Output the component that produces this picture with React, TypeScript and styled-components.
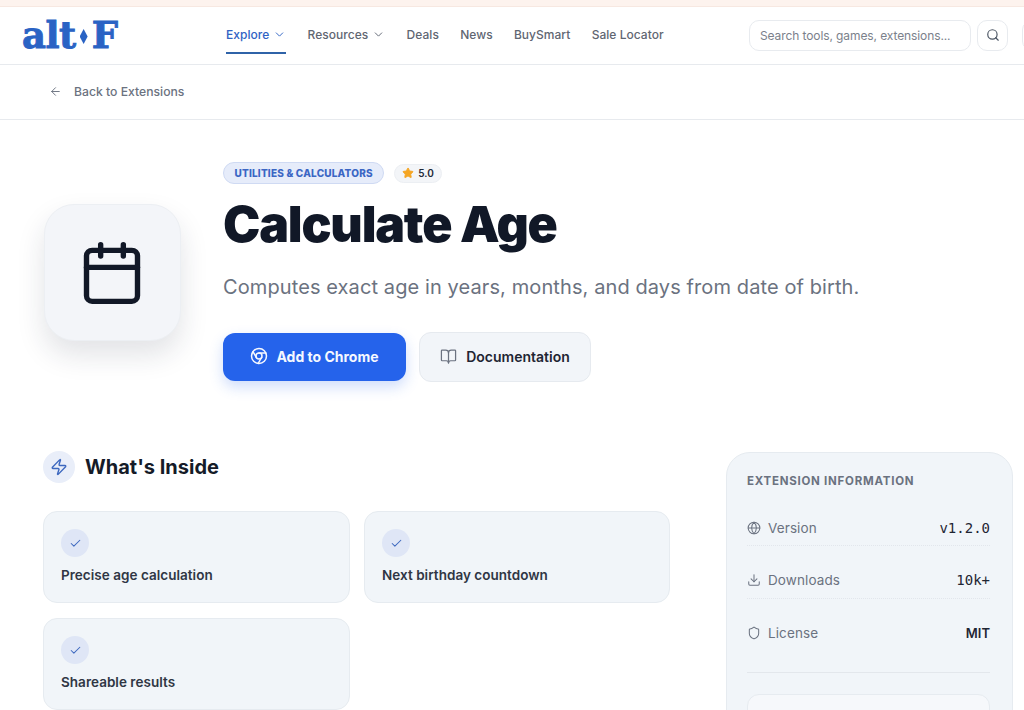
import React from "react";
import styled, { createGlobalStyle } from "styled-components";
import { ArrowLeft, BookOpen, Calendar, Check, ChevronDown, Chrome, Download, Globe, Search, Shield, Star, Zap } from "lucide-react";

const GlobalStyle = createGlobalStyle`
  html, body {
    margin: 0;
    height: 710px;
    overflow: hidden;
    background: #fff;
    font-family: Inter, "Liberation Sans", sans-serif;
    color: #111827;
  }
  * { box-sizing: border-box; }
`;

const TopStrip = styled.div`
  height: 7px;
  background: #fdf3ee;
  border-bottom: 1px solid #f7e8e1;
`;

const Header = styled.header`
  height: 58px;
  width: 1060px;
  display: flex;
  align-items: center;
  padding-left: 23px;
  border-bottom: 1px solid #e7eaee;
  white-space: nowrap;
`;

const Logo = styled.div`
  flex: none;
  width: 204px;
  height: 40px;
  margin-left: -1px;
  padding-bottom: 1px;
  display: flex;
  align-items: center;
  font-family: "DejaVu Serif", serif;
  font-weight: 700;
  font-size: 37px;
  line-height: 40px;
  letter-spacing: -0.5px;
  color: #2a63c4;
  -webkit-text-stroke: 0.9px #2a63c4;
`;

const LogoDiamond = styled.span`
  width: 8px;
  height: 15px;
  margin: 3px 4px 0 4px;
  background: #2a63c4;
  clip-path: polygon(50% 0, 100% 50%, 50% 100%, 0 50%);
`;

const Nav = styled.nav`
  flex: none;
  display: flex;
  align-items: stretch;
  height: 100%;
  gap: 21.3px;
  width: 523px;
`;

const NavItem = styled.a<{ $active?: boolean }>`
  position: relative;
  display: flex;
  align-items: center;
  gap: 4px;
  padding-bottom: 2px;
  font-size: 12px;
  font-weight: 500;
  letter-spacing: 0.03px;
  color: ${(p) => (p.$active ? "#2f63c4" : "#5f6672")};

  &::after {
    content: "";
    display: ${(p) => (p.$active ? "block" : "none")};
    position: absolute;
    left: 0;
    right: 0;
    bottom: 10px;
    height: 2px;
    background: #2f63a8;
  }
`;

const SearchBox = styled.div`
  flex: none;
  width: 222px;
  height: 31px;
  margin-top: -1px;
  display: flex;
  align-items: center;
  padding-left: 10px;
  border: 1px solid #e8ebef;
  border-radius: 10px;
  font-size: 12px;
  letter-spacing: -0.1px;
  color: #7b818b;
`;

const IconButton = styled.div`
  flex: none;
  width: 31px;
  height: 31px;
  margin: -1px 0 0 6px;
  display: flex;
  align-items: center;
  justify-content: center;
  border: 1px solid #e8ebef;
  border-radius: 10px;
  color: #4b5563;
`;

const ExtraButton = styled(IconButton)`
  margin-left: 14px;
`;

const BackBar = styled.div`
  height: 55px;
  display: flex;
  align-items: center;
  gap: 12px;
  padding: 0 0 2px 49px;
  border-bottom: 1px solid #e7eaee;
  font-size: 12.2px;
  font-weight: 500;
  color: #6b7280;
`;

const Hero = styled.section`
  display: flex;
  padding: 42px 0 0 44px;
`;

const AppIcon = styled.div`
  flex: none;
  width: 137px;
  height: 137px;
  margin-top: 42px;
  padding-right: 2px;
  display: flex;
  align-items: center;
  justify-content: center;
  background: #f3f5f9;
  border: 1px solid #eceff3;
  border-radius: 30px;
  box-shadow: 0 14px 28px rgba(30, 41, 59, 0.13);
  color: #111827;
`;

const HeroBody = styled.div`
  margin-left: 42px;
`;

const BadgeRow = styled.div`
  display: flex;
  align-items: center;
  gap: 10px;
`;

const CategoryBadge = styled.span`
  height: 22px;
  display: flex;
  align-items: center;
  padding: 0 10.5px;
  background: #e6ecfa;
  border: 1px solid #cfdaf3;
  border-radius: 11px;
  font-size: 10px;
  font-weight: 800;
  letter-spacing: 0.2px;
  color: #3b66c4;
`;

const RatingBadge = styled.span`
  height: 19px;
  display: flex;
  align-items: center;
  gap: 4px;
  padding: 0 7px;
  background: #f3f5f8;
  border: 1px solid #eceff3;
  border-radius: 10px;
  font-size: 10px;
  font-weight: 600;
  color: #1f2937;
`;

const Title = styled.h1`
  margin: 11px 0 0;
  font-size: 50px;
  line-height: 58px;
  font-weight: 900;
  letter-spacing: -1.2px;
  color: #111827;
`;

const Tagline = styled.p`
  margin: 21px 0 0;
  font-size: 20px;
  line-height: 26px;
  letter-spacing: 0.1px;
  color: #6b7280;
  white-space: nowrap;
`;

const ButtonRow = styled.div`
  display: flex;
  gap: 14px;
  margin-top: 33px;
`;

const PrimaryButton = styled.a`
  width: 183px;
  height: 48px;
  padding-bottom: 2px;
  display: flex;
  align-items: center;
  justify-content: center;
  gap: 8px;
  background: #2563eb;
  border-radius: 12px;
  box-shadow: 0 6px 14px rgba(37, 99, 235, 0.22);
  font-size: 14px;
  font-weight: 700;
  color: #f5f8ff;
`;

const SecondaryButton = styled.a`
  width: 172px;
  height: 50px;
  margin: -1px 0 0 -1px;
  padding-bottom: 2px;
  display: flex;
  align-items: center;
  justify-content: center;
  gap: 9px;
  background: #f2f5f9;
  border: 1px solid #e6eaef;
  border-radius: 12px;
  font-size: 14px;
  font-weight: 600;
  color: #1f2533;
  svg { color: #6b7280; }
`;

const Columns = styled.div`
  display: flex;
  padding: 69px 0 0 43px;
`;

const Main = styled.div`
  width: 627px;
  flex: none;
`;

const SectionHead = styled.div`
  display: flex;
  align-items: center;
  gap: 10px;
`;

const SectionIcon = styled.span`
  width: 32px;
  height: 32px;
  display: flex;
  align-items: center;
  justify-content: center;
  background: #e9eef9;
  border-radius: 50%;
  color: #3d68bf;
`;

const SectionTitle = styled.h2`
  margin: 0;
  font-size: 20px;
  font-weight: 700;
  color: #151b28;
`;

const FeatureGrid = styled.div`
  display: grid;
  grid-template-columns: 307px 306px;
  gap: 15px 14px;
  margin-top: 28px;
`;

const FeatureCard = styled.div`
  height: 92px;
  padding: 17px 17px 0;
  background: #f1f5f9;
  border: 1px solid #e6ebf0;
  border-radius: 14px;
`;

const FeatureCheck = styled.span`
  width: 28px;
  height: 28px;
  display: flex;
  align-items: center;
  justify-content: center;
  background: #dfe6f6;
  border-radius: 50%;
  color: #3d68bf;
`;

const FeatureLabel = styled.div`
  margin-top: 10px;
  font-size: 13.5px;
  font-weight: 600;
  letter-spacing: 0.03px;
  color: #2f3644;
`;

const Sidebar = styled.aside`
  flex: none;
  width: 287px;
  height: 400px;
  margin: 1px 0 0 56px;
  padding: 21px 22px 0 20px;
  background: #f1f5f9;
  border: 1px solid #e6ebf0;
  border-radius: 24px;
`;

const SidebarTitle = styled.h3`
  margin: 0 0 22px;
  font-size: 11.5px;
  line-height: 14px;
  font-weight: 700;
  letter-spacing: 0.75px;
  color: #6b7280;
`;

const InfoRow = styled.div<{ $last?: boolean }>`
  height: 36px;
  margin-bottom: ${(p) => (p.$last ? 0 : "16.5px")};
  display: flex;
  align-items: center;
  justify-content: space-between;
  border-bottom: ${(p) => (p.$last ? "none" : "1px dotted #e2e6ec")};
`;

const InfoLabel = styled.span`
  display: flex;
  align-items: center;
  gap: 7px;
  font-size: 13.5px;
  letter-spacing: 0.1px;
  color: #6b7280;
`;

const InfoValue = styled.span<{ $mono?: boolean }>`
  font-family: ${(p) => (p.$mono ? '"DejaVu Sans Mono", monospace' : "Inter, sans-serif")};
  font-size: ${(p) => (p.$mono ? "14px" : "13px")};
  font-weight: ${(p) => (p.$mono ? 500 : 600)};
  color: #1f2533;
`;

const SidebarRule = styled.div`
  margin-top: 21px;
  border-top: 1px solid #e3e7ec;
`;

const SidebarBox = styled.div`
  height: 60px;
  margin-top: 21px;
  background: #f6f8fb;
  border: 1px solid #e6ebf0;
  border-radius: 12px;
`;

const navItems = ["Deals", "News", "BuySmart", "Sale Locator"];
const features = ["Precise age calculation", "Next birthday countdown", "Shareable results"];
const info = [
  { label: "Version", value: "v1.2.0", mono: true, Icon: Globe },
  { label: "Downloads", value: "10k+", mono: true, Icon: Download },
  { label: "License", value: "MIT", mono: false, Icon: Shield },
];

export default function App() {
  return (
    <>
      <GlobalStyle />
      <TopStrip />
      <Header>
        <Logo>
          alt<LogoDiamond />F
        </Logo>
        <Nav>
          <NavItem $active>
            Explore <ChevronDown size={13} strokeWidth={1.75} />
          </NavItem>
          <NavItem>
            Resources <ChevronDown size={13} strokeWidth={1.75} />
          </NavItem>
          {navItems.map((item) => (
            <NavItem key={item}>{item}</NavItem>
          ))}
        </Nav>
        <SearchBox>Search tools, games, extensions...</SearchBox>
        <IconButton>
          <Search size={14} strokeWidth={2} />
        </IconButton>
        <ExtraButton />
      </Header>
      <BackBar>
        <ArrowLeft size={13} strokeWidth={1.75} />
        Back to Extensions
      </BackBar>
      <Hero>
        <AppIcon>
          <Calendar size={68} strokeWidth={1.9} />
        </AppIcon>
        <HeroBody>
          <BadgeRow>
            <CategoryBadge>UTILITIES &amp; CALCULATORS</CategoryBadge>
            <RatingBadge>
              <Star size={12} fill="#f5a623" color="#f5a623" />
              5.0
            </RatingBadge>
          </BadgeRow>
          <Title>Calculate Age</Title>
          <Tagline>Computes exact age in years, months, and days from date of birth.</Tagline>
          <ButtonRow>
            <PrimaryButton>
              <Chrome size={18} strokeWidth={2} />
              Add to Chrome
            </PrimaryButton>
            <SecondaryButton>
              <BookOpen size={17} strokeWidth={1.75} />
              Documentation
            </SecondaryButton>
          </ButtonRow>
        </HeroBody>
      </Hero>
      <Columns>
        <Main>
          <SectionHead>
            <SectionIcon>
              <Zap size={18} strokeWidth={1.9} />
            </SectionIcon>
            <SectionTitle>What's Inside</SectionTitle>
          </SectionHead>
          <FeatureGrid>
            {features.map((feature) => (
              <FeatureCard key={feature}>
                <FeatureCheck>
                  <Check size={13} strokeWidth={1.9} />
                </FeatureCheck>
                <FeatureLabel>{feature}</FeatureLabel>
              </FeatureCard>
            ))}
          </FeatureGrid>
        </Main>
        <Sidebar>
          <SidebarTitle>EXTENSION INFORMATION</SidebarTitle>
          {info.map(({ label, value, mono, Icon }, i) => (
            <InfoRow key={label} $last={i === info.length - 1}>
              <InfoLabel>
                <Icon size={14} strokeWidth={1.75} />
                {label}
              </InfoLabel>
              <InfoValue $mono={mono}>{value}</InfoValue>
            </InfoRow>
          ))}
          <SidebarRule />
          <SidebarBox />
        </Sidebar>
      </Columns>
    </>
  );
}
